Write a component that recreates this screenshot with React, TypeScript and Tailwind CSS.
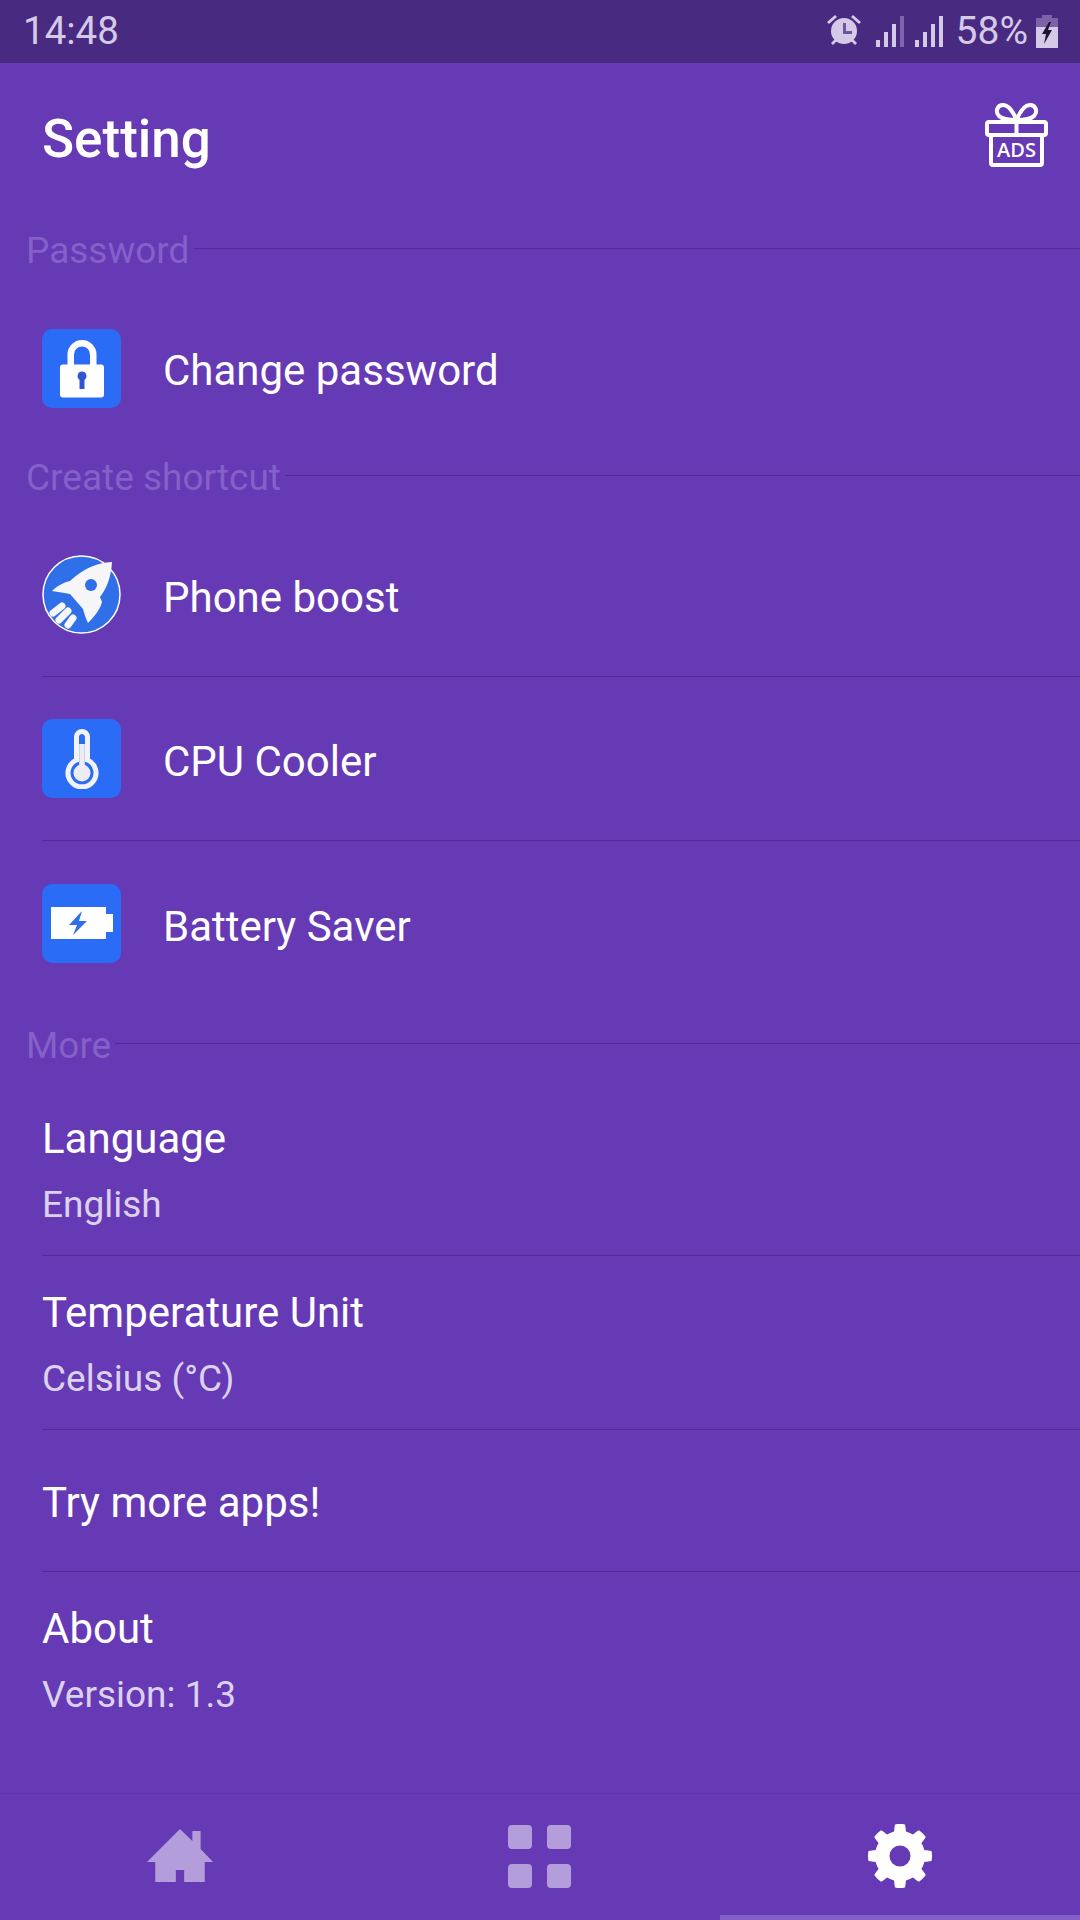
const gearPath = (() => {
  const pts: string[] = [];
  for (let i = 0; i < 360; i++) {
    const a = (i / 360) * Math.PI * 2;
    const wave = Math.cos(a * 8);
    const t = Math.min(1, Math.max(0, (wave + 0.45) / 0.9));
    const r = 25 + 7 * t * t * (3 - 2 * t);
    pts.push(`${(32 + r * Math.sin(a)).toFixed(2)} ${(32 - r * Math.cos(a)).toFixed(2)}`);
  }
  return `M${pts.join("L")}Z`;
})();

function SectionHead({ title }: { title: string }) {
  return (
    <div className="flex h-[76px] items-center pl-[26px]">
      <span className="mt-[4px] text-[37px] leading-none text-[#8560c8]">{title}</span>
      <div className="ml-[4px] h-px flex-1 bg-[#512b97]" />
    </div>
  );
}

function IconBox({ children }: { children: React.ReactNode }) {
  return <div className="flex h-[79px] w-[79px] shrink-0 items-center justify-center rounded-[10px] bg-[#2b6cf6]">{children}</div>;
}

function ShortcutRow({ icon, label, last }: { icon: React.ReactNode; label: string; last?: boolean }) {
  return (
    <div className={`ml-[42px] flex h-[164px] items-center gap-[42px] ${last ? "" : "border-b border-[#512b97]"}`}>
      {icon}
      <span className="mt-[7px] text-[42px] leading-none text-white">{label}</span>
    </div>
  );
}

function MoreRow({ title, sub, className }: { title: string; sub?: string; className: string }) {
  return (
    <div className={`ml-[42px] flex flex-col ${className}`}>
      <span className="text-[42px] leading-[48px] text-white">{title}</span>
      {sub ? <span className="mt-[18px] text-[37px] leading-[48px] text-[#dcd2ee]">{sub}</span> : null}
    </div>
  );
}

function Signal({ dim }: { dim?: boolean }) {
  return (
    <svg width="28" height="31" viewBox="0 0 28 31">
      <rect x="0" y="24" width="4" height="7" fill="#d5c9e8" />
      <rect x="8" y="16" width="4" height="15" fill="#d5c9e8" />
      <rect x="16" y="8" width="4" height="23" fill="#d5c9e8" />
      <rect x="24" y="0" width="4" height="31" fill={dim ? "#8065ad" : "#d5c9e8"} />
    </svg>
  );
}

export default function App() {
  return (
    <div className="flex h-[1920px] w-[1080px] flex-col overflow-hidden bg-[#6639b5] font-['Roboto',sans-serif]">
      <div className="flex h-[63px] shrink-0 items-center bg-[#482a80] pl-[23px] pr-[22px] text-[#d5c9e8]">
        <span className="text-[38.5px] leading-none">14:48</span>
        <div className="ml-auto flex items-center">
          <svg className="-mt-[3px]" width="34" height="32" viewBox="0 0 34 32" fill="#d5c9e8">
            <circle cx="17" cy="17" r="13" />
            <path d="M0 8 L8 1 L10 3 L2 10Z M34 8 L26 1 L24 3 L32 10Z M4 29 L8 25 L10 27 L6 31Z M30 29 L26 25 L24 27 L28 31Z" />
            <path d="M16 9h3v8h6v3h-9z" fill="#6f559e" />
          </svg>
          <div className="ml-[15px]"><Signal dim /></div>
          <div className="ml-[11px]"><Signal /></div>
          <span className="ml-[13px] text-[39px] leading-none">58%</span>
          <svg className="ml-[8px]" width="22" height="33" viewBox="0 0 22 33">
            <path d="M6 0h10v3h6v9H0V3h6z" fill="#7d62a8" />
            <path d="M0 12h22v21H0z" fill="#d5c9e8" />
            <path d="M13 7 L6 19h4l-2 10 8-14h-4l3-8z" fill="#1c1530" />
          </svg>
        </div>
      </div>

      <div className="flex h-[147px] shrink-0 justify-between pl-[42px] pr-[32px]">
        <span className="mt-[46px] text-[53px] font-medium leading-[60px] text-white">Setting</span>
        <svg className="mt-[40px]" width="63" height="64" viewBox="0 0 63 64" fill="none" stroke="white" strokeWidth="4">
          <path d="M31.5 17 C27 6 22 2 18 2 C12 2 10 9 14 13 C17 16 24 17 31.5 17Z M31.5 17 C36 6 41 2 45 2 C51 2 53 9 49 13 C46 16 39 17 31.5 17Z" />
          <rect x="2" y="19" width="59" height="13" rx="2" />
          <path d="M31.5 19 V32" />
          <path d="M6 32 V60 a2 2 0 0 0 2 2 H55 a2 2 0 0 0 2 -2 V32" />
          <text x="31.5" y="54" textAnchor="middle" fontSize="20" fontWeight="600" fill="white" stroke="none" fontFamily="'Open Sans',sans-serif">ADS</text>
        </svg>
      </div>

      <SectionHead title="Password" />
      <div className="ml-[42px] flex h-[151px] items-center gap-[42px] pt-[14px]">
        <IconBox>
          <svg width="46" height="58" viewBox="0 0 46 58">
            <path d="M11.75 26 V14.5 a11.25 11.25 0 0 1 22.5 0 V26" fill="none" stroke="white" strokeWidth="6.5" />
            <rect x="1" y="24.5" width="44" height="33" rx="3" fill="white" />
            <path d="M23 31.5 a4.5 4.5 0 0 1 2.5 8.2 V49 H20.5 V39.7 a4.5 4.5 0 0 1 2.5 -8.2z" fill="#2f55d4" />
          </svg>
        </IconBox>
        <span className="mt-[5px] text-[42px] leading-none text-white">Change password</span>
      </div>

      <SectionHead title="Create shortcut" />
      <ShortcutRow
        label="Phone boost"
        icon={
          <svg width="79" height="79" viewBox="0 0 79 79" className="shrink-0">
            <circle cx="39.5" cy="39.5" r="38.5" fill="#2f6fe8" stroke="white" strokeWidth="1.5" />
            <path d="M70 7 C55 8 42 13 28 26 C20 28 14 32 10 36 C16 37 23 38 28 39 L41 54 C42 58 44 64 46 68 C52 62 58 55 60 47 L58 42 C65 33 69 22 70 7Z" fill="#f6f6f8" />
            <circle cx="49" cy="30" r="6" fill="#2f6fe8" />
            <g stroke="#f6f6f8" strokeWidth="7" strokeLinecap="round">
              <path d="M11 58 L20 51" />
              <path d="M17 65 L26 56" />
              <path d="M26 70 L31 63" />
            </g>
          </svg>
        }
      />
      <ShortcutRow
        label="CPU Cooler"
        icon={
          <IconBox>
            <svg width="36" height="60" viewBox="0 0 36 60" fill="none">
              <path d="M12.5 31 V8 a5.5 5.5 0 0 1 11 0 V31 a14 14 0 1 1 -11 0Z" stroke="#f2f3f8" strokeWidth="5" />
              <rect x="15.2" y="15" width="5.6" height="24" fill="#ececf2" />
              <circle cx="18" cy="43.9" r="8.5" fill="#ececf2" />
            </svg>
          </IconBox>
        }
      />
      <ShortcutRow
        label="Battery Saver"
        last
        icon={
          <IconBox>
            <svg width="62" height="32" viewBox="0 0 62 32">
              <path d="M0 0H55V7H62V25H55V32H0Z" fill="white" />
              <path d="M31 4 L18 18 H26 L22 28 L36 14 H28 L31 4Z" fill="#2f6fe8" />
            </svg>
          </IconBox>
        }
      />

      <SectionHead title="More" />
      <MoreRow title="Language" sub="English" className="h-[175px] border-b border-[#512b97] pt-[34px]" />
      <MoreRow title="Temperature Unit" sub="Celsius (°C)" className="h-[174px] border-b border-[#512b97] pt-[33px]" />
      <div className="ml-[42px] flex h-[142px] items-center border-b border-[#512b97]">
        <span className="mt-[4px] text-[42px] leading-none text-white">Try more apps!</span>
      </div>
      <MoreRow title="About" sub="Version: 1.3" className="h-[221px] pt-[33px]" />

      <div className="grid h-[122px] shrink-0 grid-cols-3 border-t border-[#5c33a8]">
        <div className="flex items-center justify-center pt-[2px]">
          <svg width="66" height="54" viewBox="0 0 64 54" preserveAspectRatio="none" fill="#b39ddb">
            <path d="M32 0 L44 12 V2 H52 V20 L64 33 H56 V53 H36 V41 H28 V53 H8 V33 H0Z" />
          </svg>
        </div>
        <div className="flex items-center justify-center pr-[2px] pt-[4px]">
          <div className="grid grid-cols-2 gap-[15px]">
            <div className="h-[24px] w-[24px] rounded-[4px] bg-[#b39ddb]" />
            <div className="h-[24px] w-[24px] rounded-[4px] bg-[#b39ddb]" />
            <div className="h-[24px] w-[24px] rounded-[4px] bg-[#b39ddb]" />
            <div className="h-[24px] w-[24px] rounded-[4px] bg-[#b39ddb]" />
          </div>
        </div>
        <div className="flex items-center justify-center pr-[1px] pt-[2px]">
          <svg width="64" height="64" viewBox="0 0 64 64">
            <path d={`${gearPath}M32 21.5a10.5 10.5 0 1 0 0 21a10.5 10.5 0 1 0 0-21Z`} fill="white" fillRule="evenodd" />
          </svg>
        </div>
      </div>
      <div className="ml-auto h-[5px] w-[360px] shrink-0 bg-[#8560c8]" />
    </div>
  );
}
